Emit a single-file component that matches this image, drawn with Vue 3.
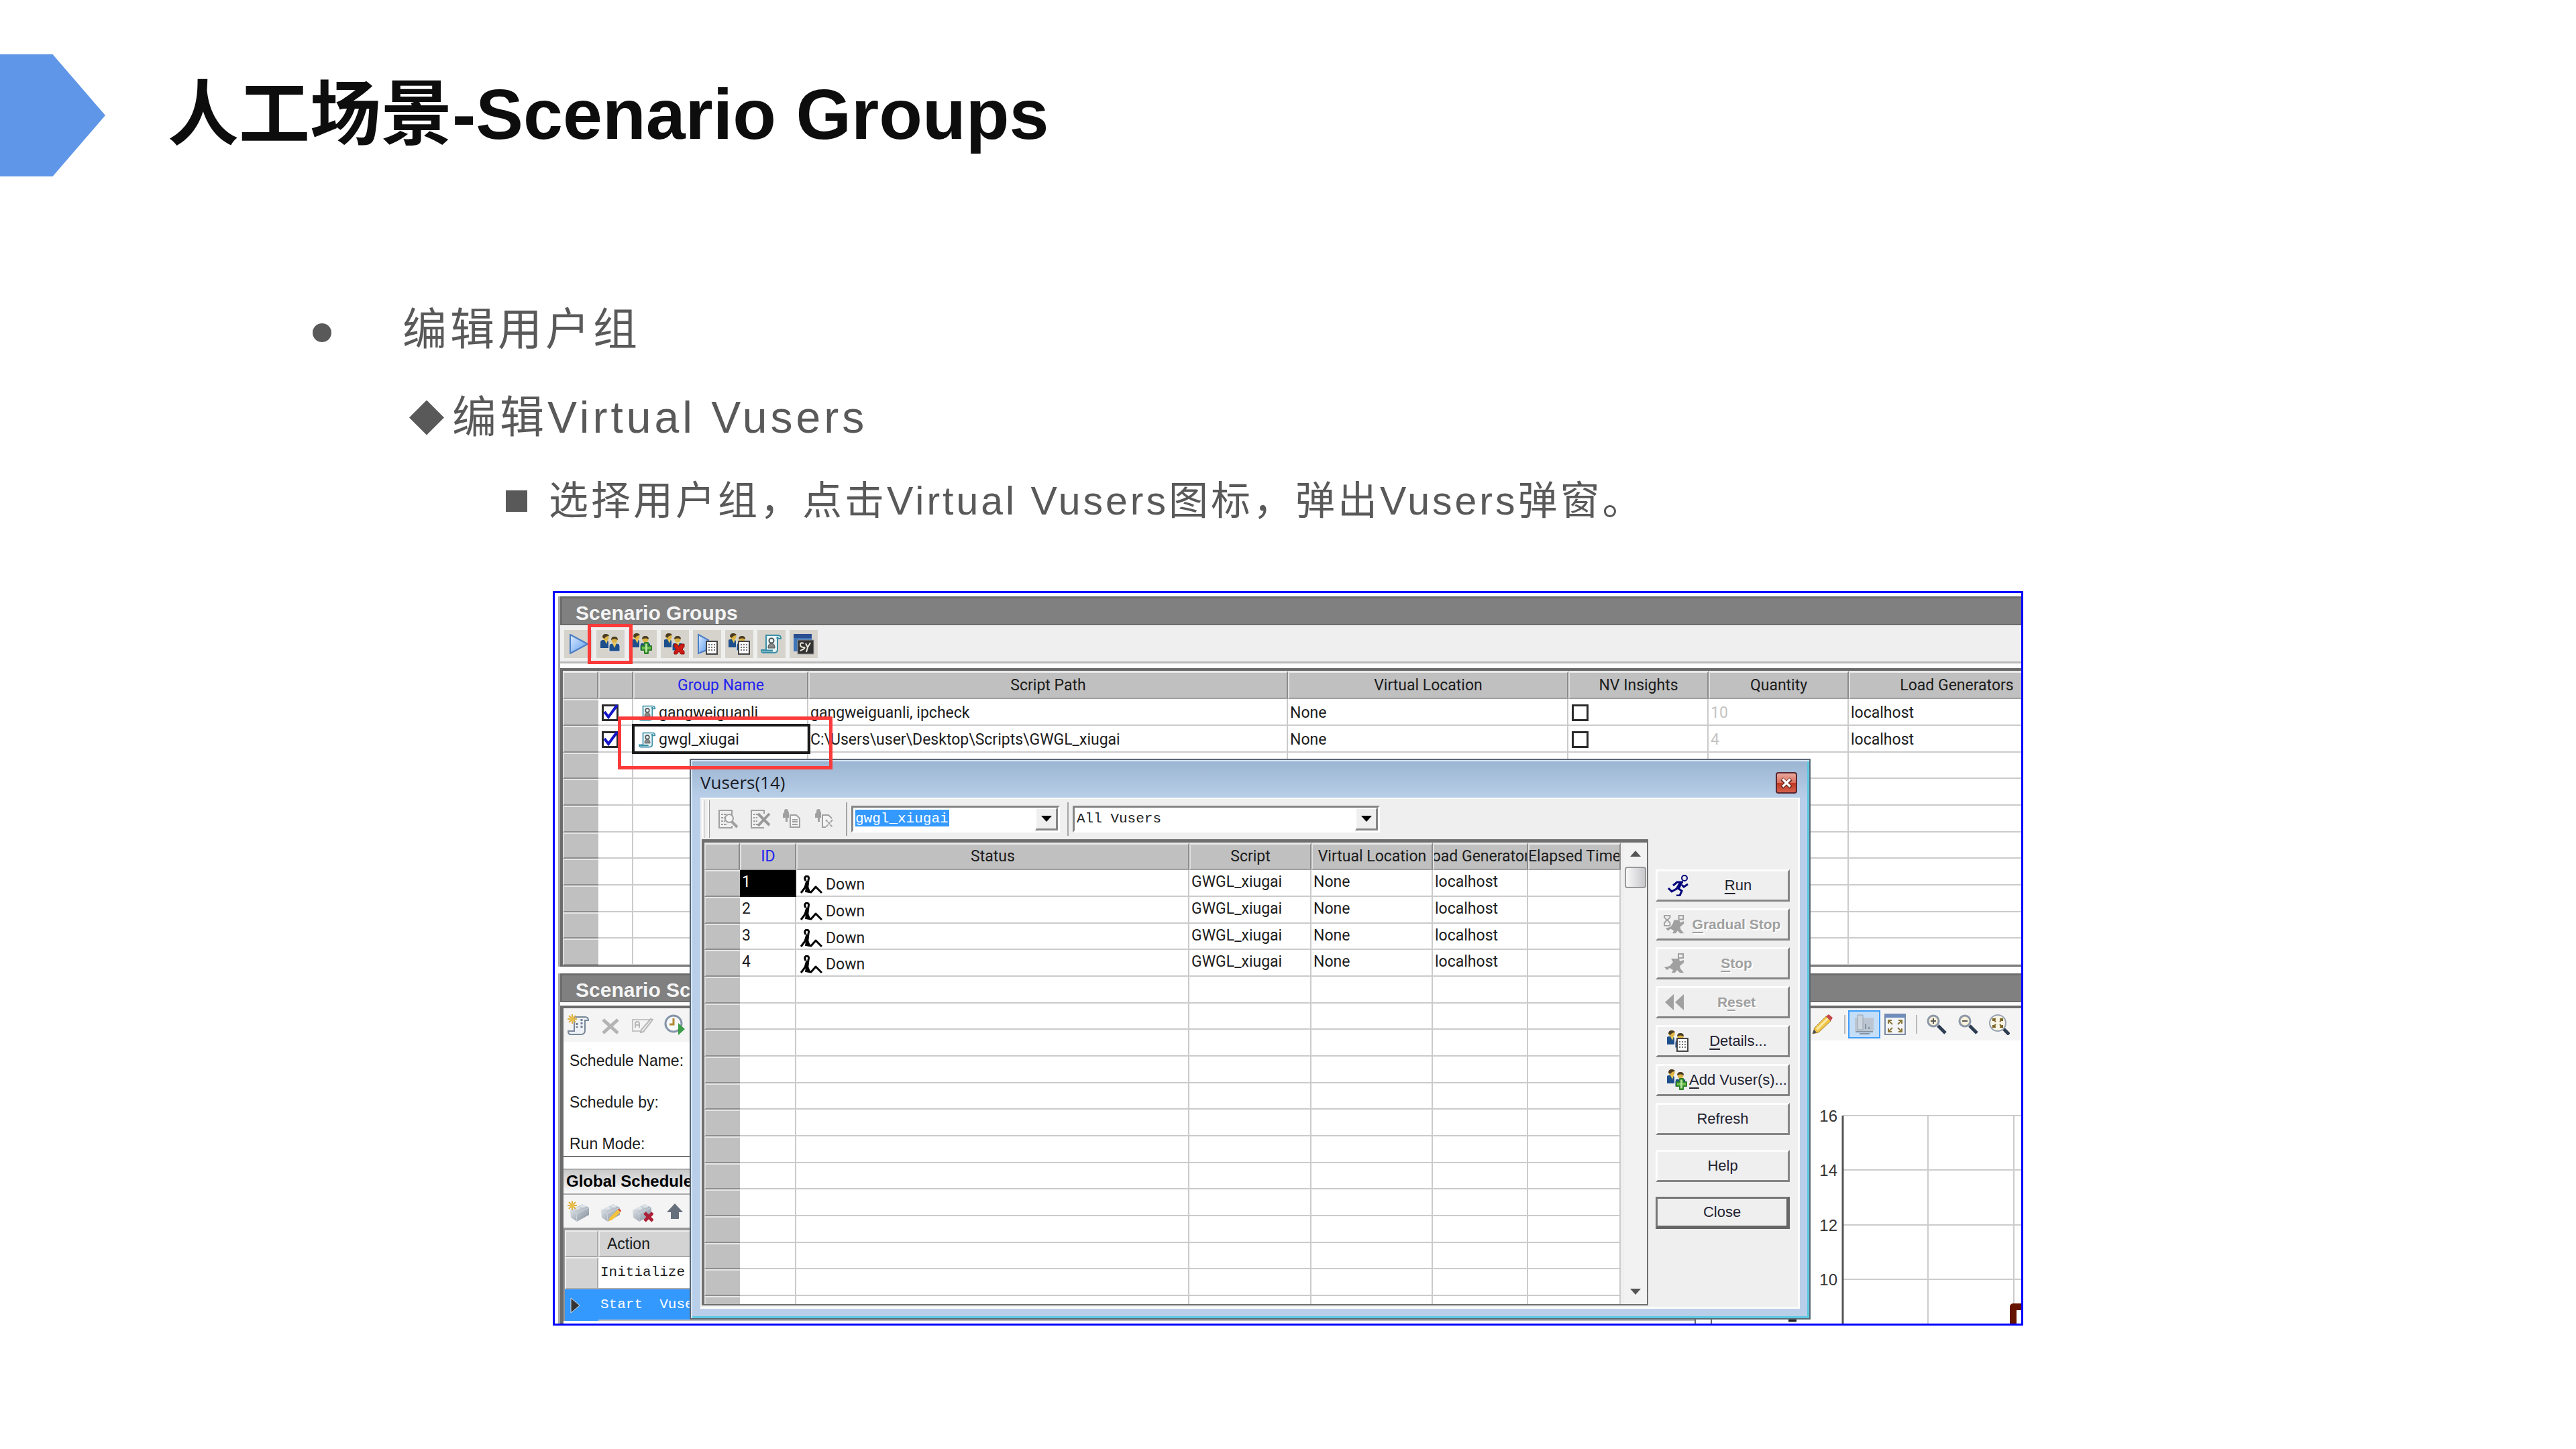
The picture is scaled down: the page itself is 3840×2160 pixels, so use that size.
<script setup>
const groupTools = ['play', 'users', 'users-add', 'users-del', 'play-list', 'users-list', 'script', 'sy']
const groupCols = [53, 52, 261, 715, 418, 209, 209, 322]
const groupHeads = ['', '', 'Group Name', 'Script Path', 'Virtual Location', 'NV Insights', 'Quantity', 'Load Generators']
const groups = [
  { name: 'gangweiguanli', path: 'gangweiguanli, ipcheck', loc: 'None', qty: 10, gen: 'localhost' },
  { name: 'gwgl_xiugai', path: 'C:\\Users\\user\\Desktop\\Scripts\\GWGL_xiugai', loc: 'None', qty: 4, gen: 'localhost', current: true },
]
const vuserTools = ['find', 'find-x', 'man-doc', 'man-x']
const vuserHeads = ['', 'ID', 'Status', 'Script', 'Virtual Location', 'Load Generators', 'Elapsed Time']
const vusers = [1, 2, 3, 4]
const actions = [
  { key: 'R', rest: 'un', icon: 'run' },
  { key: 'G', rest: 'radual Stop', icon: 'gradual', off: true },
  { key: 'S', rest: 'top', icon: 'stop', off: true },
  { pre: 'R', key: 'e', rest: 'set', icon: 'rewind', off: true },
  { key: 'D', rest: 'etails...', icon: 'users-list' },
  { key: 'A', rest: 'dd Vuser(s)...', icon: 'users-add' },
]
const ticks = [
  { v: 16, y: 112 },
  { v: 14, y: 193 },
  { v: 12, y: 275 },
  { v: 10, y: 356 },
]
</script>

<template>
  <main class="slide">
    <svg class="defs" aria-hidden="true">
      <defs>
        <linearGradient id="gPlay" x1="0" y1="0" x2="1" y2="1"><stop offset="0" stop-color="#dcebfd" /><stop offset="1" stop-color="#5b9bf0" /></linearGradient>
        <linearGradient id="gSteel" x1="0" y1="0" x2="1" y2="1"><stop offset="0" stop-color="#eef1f5" /><stop offset="1" stop-color="#7d8997" /></linearGradient>
        <symbol id="i-play" viewBox="0 0 32 32"><path d="M4 2L30 16 4 30z" fill="url(#gPlay)" stroke="#4a7ec4" stroke-width="2" stroke-linejoin="round" /></symbol>
        <symbol id="pair" viewBox="0 0 32 32">
          <path d="M1 22V14q0-4 4-4h4q4 0 4 4v8z" fill="#1d4f8c" />
          <path d="M7 10l3 6 2-6z" fill="#e8c95a" />
          <circle cx="9" cy="6" r="4.500" fill="#dcb445" /><path d="M4 6q0-5 5-5 4 0 5 3-5 0-7 4z" fill="#4a3c22" />
          <path d="M14 27v-8q0-4 4-4h8q4 0 4 4v8z" fill="#1d4f8c" stroke="#dfe6ee" stroke-width="1" />
          <path d="M19 15l3 7 3-7z" fill="#e8c95a" />
          <circle cx="22" cy="10" r="4.500" fill="#dcb445" /><path d="M17 10q0-5 5-5t5 5q-5-3-10 0z" fill="#4a3c22" />
        </symbol>
        <symbol id="i-users" viewBox="0 0 32 32"><use href="#pair" /></symbol>
        <symbol id="i-users-add" viewBox="0 0 32 32"><use href="#pair" x="-2" y="-1" /><path d="M19 14h5v5h5v6h-5v5h-5v-5h-5v-6h5z" fill="#6cc04a" stroke="#2f7f2b" stroke-width="2" stroke-linejoin="round" /><path d="M20 16h3v12h-3z" fill="#b5e69c" /></symbol>
        <symbol id="i-users-del" viewBox="0 0 32 32"><use href="#pair" x="-2" y="-1" /><path d="M15 16h4l3 4 3-4h5v4l-3 4 3 3v4h-5l-3-4-3 4h-4v-4l3-3-3-4z" fill="#cc1c14" stroke="#8d0f0b" stroke-width="1" /></symbol>
        <symbol id="sheet" viewBox="0 0 32 32"><path d="M15 12h16v19H15z" fill="#fafafa" stroke="#444" stroke-width="2" /><path d="M18 17h10M18 21h10M18 25h10" stroke="#777" stroke-width="2" stroke-dasharray="2 2" /></symbol>
        <symbol id="i-play-list" viewBox="0 0 32 32"><path d="M3 2L18 10V24L3 30z" fill="url(#gPlay)" stroke="#4a7ec4" stroke-width="2" /><use href="#sheet" /></symbol>
        <symbol id="i-users-list" viewBox="0 0 32 32"><use href="#pair" x="-2" y="-1" /><use href="#sheet" /></symbol>
        <symbol id="i-script" viewBox="0 0 32 32"><path d="M8 3h18q4 0 4 5h-5v16q0 5-5 5H4q-3 0-3-4h7z" fill="#e6f4f6" stroke="#3c8fa5" stroke-width="2" /><path d="M25 8V5M3 26h15" stroke="#3c8fa5" stroke-width="3" /><circle cx="16" cy="11" r="3.500" fill="none" stroke="#555" stroke-width="2" /><path d="M11 22q0-7 5-7t5 7z" fill="#888" stroke="#555" stroke-width="1" /></symbol>
        <symbol id="i-sy" viewBox="0 0 32 32"><path d="M1 1h27v26H1z" fill="#3f76b8" /><path d="M1 1h27v6H1z" fill="#2a4f91" /><path d="M7 10h24v21H7z" fill="#333" stroke="#999" stroke-width="1" /><path d="M16 15q-5-2-5 2t5 4-5 5M19 15l3 6 4-7M22 21l-2 7" fill="none" stroke="#e8e8d8" stroke-width="2" /></symbol>
        <symbol id="i-find" viewBox="0 0 32 32"><path d="M22 14V3H3v26h19v-3" fill="none" stroke="#a0a0a0" stroke-width="2" /><path d="M3 3h19M6 9h9M6 14h6M6 19h6M6 24h9" stroke="#a0a0a0" stroke-width="2" stroke-dasharray="3 1" /><circle cx="18" cy="15" r="6" fill="#f4f4f4" stroke="#a0a0a0" stroke-width="2" /><path d="M22 20l8 8" stroke="#a0a0a0" stroke-width="4" /></symbol>
        <symbol id="i-find-x" viewBox="0 0 32 32"><path d="M22 8V3H3v26h19" fill="none" stroke="#a0a0a0" stroke-width="2" /><path d="M3 3h19M6 9h9M6 14h6M6 19h6M6 24h7" stroke="#a0a0a0" stroke-width="2" stroke-dasharray="3 1" /><path d="M13 8l17 17M30 8L13 26" stroke="#999" stroke-width="4" /></symbol>
        <symbol id="i-man-doc" viewBox="0 0 32 32"><path d="M5 5h6v9H9v6H6v-6H2V8z" fill="#a0a0a0" /><circle cx="7" cy="4" r="3" fill="#a0a0a0" /><path d="M13 10h9l5 5v13H13z" fill="#f4f4f4" stroke="#a0a0a0" stroke-width="2" /><path d="M16 17h8M16 20h8M16 24h8" stroke="#a0a0a0" stroke-width="2" /></symbol>
        <symbol id="i-man-x" viewBox="0 0 32 32"><path d="M5 5h6v9H9v6H6v-6H2V8z" fill="#a0a0a0" /><circle cx="7" cy="4" r="3" fill="#a0a0a0" /><path d="M18 28h-5V10h9l5 5" fill="#f4f4f4" stroke="#a0a0a0" stroke-width="2" /><path d="M18 17l10 11M28 17L18 28" stroke="#a0a0a0" stroke-width="2" stroke-dasharray="4 1" /></symbol>
        <symbol id="i-down" viewBox="0 0 34 28"><path d="M9 8q-3-5 1-7 5 0 3 6L11 24" fill="none" stroke="#000" stroke-width="3" /><path d="M11 8L8 18l-6 8M9 23l8 2 7-8 9 9" fill="none" stroke="#000" stroke-width="3" stroke-linejoin="round" /><path d="M10 10l-2 15 9 1z" /></symbol>
        <symbol id="i-run" viewBox="0 0 32 32"><circle cx="26" cy="5" r="4" fill="none" stroke="#00007d" stroke-width="2" /><path d="M24 11H15l-6 5M20 12l-6 9-7 4-5-5M16 20l6 4-3 7h-5M22 15l3 3 6-4" fill="none" stroke="#00007d" stroke-width="3" /><path d="M19 10l4 2-4 9-5-2z" fill="#00007d" /></symbol>
        <symbol id="i-stop" viewBox="0 0 32 32"><path d="M22 2h7v6h-7z" fill="none" stroke="#a0a0a0" stroke-width="2" /><path d="M11 9h12l1 4 6-2v4l-6 5 1 4 5 6h-6l-4-4-3 4h-5l2-4-5-3-4 3-4-4 8-2 5-6z" fill="#a0a0a0" /></symbol>
        <symbol id="i-gradual" viewBox="0 0 34 32"><path d="M24 2h7v6h-7z" fill="none" stroke="#a0a0a0" stroke-width="2" /><path d="M16 9h9l1 4 6-2v4l-6 5 1 4 5 6h-6l-4-4-3 4h-5l2-4-5-3-4 3-4-4 8-2 4-6z" fill="#a0a0a0" /><path d="M1 2h9v3L6 9l4 5v4H1v-4l4-5-4-4z" fill="none" stroke="#a0a0a0" stroke-width="2" /></symbol>
        <symbol id="i-rewind" viewBox="0 0 32 32"><path d="M15 4v24L2 16zM30 4v24L17 16z" fill="#a0a0a0" /></symbol>
        <symbol id="star" viewBox="0 0 32 32"><path d="M7 0v14M0 7h14M2 2l10 10M12 2L2 12" stroke="#dcae3e" stroke-width="2" /><circle cx="7" cy="7" r="3.500" fill="#e9bf4c" /></symbol>
        <symbol id="i-sched-new" viewBox="0 0 32 32"><path d="M10 4h16q5 0 5 5h-5v15q0 6-6 6H5q-4 0-4-5h9z" fill="#eef2f6" stroke="#78879a" stroke-width="2" /><path d="M14 13v7M21 7v14" stroke="#6f7f93" stroke-width="3" stroke-dasharray="3 2" /><use href="#star" /></symbol>
        <symbol id="i-cross" viewBox="0 0 32 32"><path d="M5 8l22 20M27 8L5 28" stroke="#b4b4b4" stroke-width="5" /></symbol>
        <symbol id="i-rename" viewBox="0 0 32 32"><path d="M27 8H1v17h12" fill="none" stroke="#c4c4c4" stroke-width="2" /><path d="M5 20v-6q0-3 3-3t3 3v6M5 16h6" fill="none" stroke="#b8b8b8" stroke-width="2" /><path d="M31 8L17 26l-4 1 1-4L28 7z" fill="#eee" stroke="#b8b8b8" stroke-width="2" /></symbol>
        <symbol id="i-clock" viewBox="0 0 32 32"><circle cx="14" cy="14" r="12" fill="#f7f9fb" stroke="#8595a8" stroke-width="3" /><path d="M14 6v9H8" fill="none" stroke="#b28a32" stroke-width="3" /><path d="M21 13l10 9-10 9z" fill="#3c9c4a" /></symbol>
        <symbol id="brick" viewBox="0 0 32 32"><path d="M2 14L20 5l10 5v11L12 31 3 25z" fill="url(#gSteel)" /><path d="M2 14l9 5 19-9M11 19l1 12" fill="none" stroke="#cfd6de" stroke-width="1" /><ellipse cx="12" cy="11" rx="4" ry="2" fill="#dfe4ea" /><ellipse cx="21" cy="8" rx="4" ry="2" fill="#dfe4ea" /></symbol>
        <symbol id="i-brick-new" viewBox="0 0 32 32"><use href="#brick" x="2" /><use href="#star" /></symbol>
        <symbol id="i-brick-edit" viewBox="0 0 32 32"><use href="#brick" /><path d="M13 30l2-5L27 13l4 4-13 12z" fill="#f3c33e" /><path d="M27 13l2-1 3 2-1 3z" fill="#e0443c" /></symbol>
        <symbol id="i-brick-del" viewBox="0 0 32 32"><use href="#brick" x="-1" /><path d="M19 18l12 12M31 18L19 30" stroke="#ad1f35" stroke-width="5" /></symbol>
        <symbol id="i-up" viewBox="0 0 32 32"><path d="M16 4l12 13h-6v10H10V17H4z" fill="#66707d" /></symbol>
        <symbol id="i-pencil" viewBox="0 0 32 32"><path d="M1 30l3-9L21 4l7 7-18 17z" fill="#f0c548" stroke="#a5852f" stroke-width="1" /><path d="M6 22L23 6l2 2L8 25z" fill="#fae9a5" /><path d="M21 4l4-3 6 5-3 5z" fill="#c4474a" /><path d="M1 30l2-6 4 4z" fill="#3b4b60" /></symbol>
        <symbol id="i-monitor" viewBox="0 0 32 32"><path d="M2 6h28v20H2z" fill="#bcc6d2" /><path d="M6 2h8v22H6z" fill="#cdd5de" stroke="#98a4b2" stroke-width="1" /><path d="M18 15v8M23 20v3M3 27h26M9 30h15" stroke="#8693a3" stroke-width="2" /></symbol>
        <symbol id="i-fit" viewBox="0 0 32 32"><path d="M1 1h30v30H1z" fill="#f3f5f8" stroke="#7a8aa3" stroke-width="2" /><path d="M1 1h30v5H1z" fill="#6f8cbd" /><path d="M6 15v-5h5M6 10l6 6M26 15v-5h-5M26 10l-6 6M6 22v5h5M6 27l6-6M26 22v5h-5M26 27l-6-6" fill="none" stroke="#8b7537" stroke-width="2" /></symbol>
        <symbol id="lens" viewBox="0 0 32 32"><path d="M19 18l11 11" stroke="#2e3d52" stroke-width="5" /><circle cx="12" cy="11" r="8" fill="#f8f1da" stroke="#8d99a8" stroke-width="3" /></symbol>
        <symbol id="i-zoom-in" viewBox="0 0 32 32"><use href="#lens" /><path d="M12 7v8M8 11h8" stroke="#555" stroke-width="2" /></symbol>
        <symbol id="i-zoom-out" viewBox="0 0 32 32"><use href="#lens" /><path d="M8 11h8" stroke="#555" stroke-width="2" /></symbol>
        <symbol id="i-zoom-fit" viewBox="0 0 32 32"><path d="M22 22l9 9" stroke="#2e3d52" stroke-width="5" /><circle cx="14" cy="14" r="12" fill="#f8f4e6" stroke="#98a3b1" stroke-width="2" /><path d="M7 11V8h4M17 8h4v3M7 17v3h4M17 20h4v-3M8 9l3 3M20 9l-3 3M8 19l3-3M20 19l-3-3" fill="none" stroke="#7b6426" stroke-width="2" /></symbol>
      </defs>
    </svg>

    <header class="head">
      <span class="pointer"></span>
      <h1>人工场景-Scenario Groups</h1>
    </header>

    <ul class="outline">
      <li class="l1"><span class="dot"></span>编辑用户组</li>
      <li class="l2"><span class="diamond"></span>编辑Virtual Vusers</li>
      <li class="l3"><span class="square"></span>选择用户组，点击Virtual Vusers图标，弹出Vusers弹窗。</li>
    </ul>

    <section class="frame">
      <section class="panel">
        <h2 class="bar">Scenario Groups</h2>
        <div class="tools">
          <button v-for="t in groupTools" :key="t" type="button" class="tile" :aria-label="t">
            <svg><use :href="'#i-' + t" /></svg>
          </button>
        </div>
        <div class="grid-wrap">
          <table class="grid groups">
            <colgroup><col v-for="(w, i) in groupCols" :key="i" :style="{ width: w + 'px' }" /></colgroup>
            <thead>
              <tr><th v-for="(h, i) in groupHeads" :key="i" :class="{ key: i === 2 }">{{ h }}</th></tr>
            </thead>
            <tbody>
              <tr v-for="g in groups" :key="g.name">
                <td class="rowhead"></td>
                <td class="check"><label class="box"><input type="checkbox" checked :aria-label="g.name" /><svg viewBox="0 0 25 25"><path d="M4 11l6 8L23 1" fill="none" stroke="#1414c8" stroke-width="4" /></svg></label></td>
                <td :class="{ current: g.current }"><span class="named"><svg><use href="#i-script" /></svg>{{ g.name }}</span></td>
                <td>{{ g.path }}</td>
                <td>{{ g.loc }}</td>
                <td class="check"><label class="box"><input type="checkbox" aria-label="NV Insights" /></label></td>
                <td class="dim">{{ g.qty }}</td>
                <td>{{ g.gen }}</td>
              </tr>
              <tr v-for="n in 8" :key="n"><td class="rowhead"></td><td v-for="c in 7" :key="c"></td></tr>
            </tbody>
          </table>
        </div>
      </section>

      <section class="panel lower">
        <h2 class="bar">Scenario Schedule</h2>
        <div class="halves">
          <div class="schedule">
            <div class="strip">
              <button v-for="t in ['sched-new', 'cross', 'rename', 'clock']" :key="t" type="button" class="plain" :aria-label="t"><svg><use :href="'#i-' + t" /></svg></button>
            </div>
            <dl class="fields">
              <dt>Schedule Name:</dt>
              <dt>Schedule by:</dt>
              <dt>Run Mode:</dt>
            </dl>
            <h3>Global Schedule</h3>
            <div class="strip bricks">
              <button v-for="t in ['brick-new', 'brick-edit', 'brick-del', 'up']" :key="t" type="button" class="plain" :aria-label="t"><svg><use :href="'#i-' + t" /></svg></button>
            </div>
            <table class="acts">
              <thead><tr><th></th><th>Action</th></tr></thead>
              <tbody>
                <tr><th></th><td>Initialize</td></tr>
                <tr class="on"><th><svg viewBox="0 0 16 24"><path d="M1 1l13 11L1 23z" fill="#333" stroke="#ddd" stroke-width="1" /></svg></th><td>Start&nbsp; Vusers</td></tr>
              </tbody>
            </table>
          </div>
          <div class="graph">
            <div class="strip graph-tools">
              <button type="button" class="plain" aria-label="Edit"><svg><use href="#i-pencil" /></svg></button>
              <i class="sep"></i>
              <button type="button" class="plain picked" aria-label="Graph"><svg><use href="#i-monitor" /></svg></button>
              <button type="button" class="plain" aria-label="Fit"><svg><use href="#i-fit" /></svg></button>
              <i class="sep"></i>
              <button v-for="t in ['zoom-in', 'zoom-out', 'zoom-fit']" :key="t" type="button" class="plain" :aria-label="t"><svg><use :href="'#i-' + t" /></svg></button>
            </div>
            <svg class="chart" width="464" height="422" viewBox="0 0 464 422">
              <g v-for="t in ticks" :key="t.v">
                <path :d="`M195 ${t.y}H464`" stroke="#ccc" stroke-width="2" />
                <text x="187" :y="t.y + 9" text-anchor="end">{{ t.v }}</text>
              </g>
              <path d="M322 112V422M450 112V422" stroke="#ccc" stroke-width="2" />
              <path d="M195 112V422" stroke="#555" stroke-width="3" />
              <path d="M464 397H449V422" fill="none" stroke="#661400" stroke-width="10" stroke-linejoin="round" />
              <path d="M114 417H126" stroke="#222" stroke-width="5" />
            </svg>
          </div>
        </div>
      </section>

      <section class="dialog" role="dialog" aria-label="Vusers">
        <header class="caption">
          <span>Vusers(14)</span>
          <button type="button" class="x" aria-label="Close window"><svg viewBox="0 0 16 16"><path d="M2 3l12 11M14 3L2 14" stroke="#6b2a22" stroke-width="5" /><path d="M3 3l10 10M13 3L3 13" stroke="#fff" stroke-width="3" /></svg></button>
        </header>
        <div class="body">
          <div class="vtools">
            <i class="grip"></i><i class="grip"></i>
            <button v-for="t in vuserTools" :key="t" type="button" class="plain" :aria-label="t"><svg><use :href="'#i-' + t" /></svg></button>
            <i class="sep first"></i>
            <label class="combo group"><select aria-label="Group"><option>gwgl_xiugai</option></select><span class="drop"></span></label>
            <i class="sep second"></i>
            <label class="combo filter"><select aria-label="Filter"><option>All Vusers</option></select><span class="drop"></span></label>
          </div>
          <div class="split">
            <div class="vwrap">
              <div class="vclip">
                <table class="grid vusers">
                  <colgroup><col class="w53" /><col class="w84" /><col /><col class="w182" /><col class="w181" /><col class="w142" /><col class="w138" /></colgroup>
                  <thead>
                    <tr><th v-for="(h, i) in vuserHeads" :key="i" :class="{ key: i === 1 }"><span class="mid">{{ h }}</span></th></tr>
                  </thead>
                  <tbody>
                    <tr v-for="v in vusers" :key="v">
                      <td class="rowhead"></td>
                      <td :class="{ black: v === 1 }">{{ v }}</td>
                      <td><span class="status"><svg><use href="#i-down" /></svg>Down</span></td>
                      <td>GWGL_xiugai</td>
                      <td>None</td>
                      <td>localhost</td>
                      <td></td>
                    </tr>
                    <tr v-for="n in 13" :key="n"><td class="rowhead"></td><td v-for="c in 6" :key="c"></td></tr>
                  </tbody>
                </table>
              </div>
              <div class="scroll"><i class="up"></i><i class="thumb"></i><i class="down"></i></div>
            </div>
            <div class="side">
              <button v-for="a in actions" :key="a.icon" type="button" class="btn" :class="{ off: a.off }" :disabled="a.off">
                <svg><use :href="'#i-' + a.icon" /></svg>
                <span>{{ a.pre }}<u>{{ a.key }}</u>{{ a.rest }}</span>
              </button>
              <button type="button" class="btn">Refresh</button>
              <button type="button" class="btn apart">Help</button>
              <button type="button" class="btn apart default">Close</button>
            </div>
          </div>
        </div>
      </section>

      <i class="mark tool-mark"></i>
      <i class="mark row-mark"></i>
    </section>
  </main>
</template>

<style>
body { background: #fff; }
</style>

<style scoped>
* { box-sizing: border-box; }
.slide { font-family: "Liberation Sans", "Noto Sans CJK SC", sans-serif; padding-top: 81px; color: #595959; }
.defs { position: absolute; width: 0; height: 0; }
h1, h2, h3, ul, dl { margin: 0; padding: 0; }
button { font: inherit; color: inherit; padding: 0; border: 0; background: none; }
.head { display: flex; align-items: center; gap: 93px; }
.pointer { width: 157px; height: 182px; background: #5f96e7; clip-path: polygon(0 0, 50% 0, 100% 50%, 50% 100%, 0 100%); }
h1 { font-size: 106px; line-height: 178px; height: 182px; color: #0d0d0d; font-weight: 700; }

.outline { list-style: none; margin-top: 163px; }
.outline li { display: flex; align-items: center; white-space: nowrap; }
.l1, .l2 { font-size: 66px; line-height: 131px; letter-spacing: 5px; }
.l1 { padding-left: 466px; gap: 106px; }
.l2 { padding-left: 610px; gap: 12px; }
.l3 { font-size: 59px; line-height: 118px; letter-spacing: 4px; padding-left: 754px; gap: 32px; }
.dot { width: 28px; height: 28px; margin-top: 8px; border-radius: 50%; background: #595959; }
.diamond { width: 52px; height: 52px; background: #595959; clip-path: polygon(50% 0, 100% 50%, 50% 100%, 0 50%); }
.square { width: 32px; height: 32px; background: #595959; }

.frame { position: relative; margin: 75px 824px 0; border: 3px solid #00f; padding: 5px 0 0 5px; overflow: hidden; color: #1c1c1c; font-family: Roboto, "Liberation Sans", sans-serif; font-size: 23px; background: #fdfdfd; }
.panel { border-left: 3px solid #a8a8a8; }
.bar { height: 43px; padding-left: 20px; background: #808080; border: solid #6c6c6c; border-width: 3px 0 2px 3px; color: #f4f4f4; font: 700 30px/44px "Liberation Sans", sans-serif; }
.tools { display: flex; align-items: center; gap: 6px; height: 57px; padding: 2px 6px 0; background: #efefef; border-bottom: 3px solid #b9b9b9; }
.tile { width: 42px; height: 42px; background: #d6d3cc; display: grid; place-items: center; }
.tile svg, .plain svg { display: block; width: 32px; height: 32px; }
.grid-wrap { margin-top: 7px; border: solid #6b6b6b; border-width: 4px 0 2px 4px; overflow: hidden; }

.grid { table-layout: fixed; border-collapse: separate; border-spacing: 0; background: #fff; }
.groups { width: 2239px; }
.grid th { height: 42px; padding: 0; background: #c0c0c0; border: solid; border-width: 3px 2px 2px 2px; border-color: #e9e9e9 #8b8b8b #a0a0a0 #e0e0e0; font-weight: 400; text-align: center; line-height: 34px; overflow: hidden; }
.grid .key { color: #2222f0; }
.grid td { height: 40px; padding: 3px 3px 0; border: solid #cbcbcb; border-width: 0 2px 2px 0; line-height: 34px; white-space: nowrap; }
.grid tr:nth-child(3n) td { height: 39px; }
.grid td.rowhead { background: #c0c0c0; border: solid; border-width: 2px 0 2px 2px; border-color: #e6e6e6 #c0c0c0 #8e8e8e #dcdcdc; }
.grid td.check { padding-left: 5px; }
.grid td.dim { color: #c4c4c4; }
.named { display: flex; align-items: center; gap: 4px; padding-left: 5px; }
.named svg { width: 26px; height: 30px; }
.current { position: relative; }
.current::after { content: ""; position: absolute; inset: -3px -5px -4px -2px; border: 4px solid #1a1a1a; }
.box { position: relative; display: block; width: 25px; height: 25px; }
.box input { appearance: none; display: block; margin: 0; width: 25px; height: 25px; border: 3px solid #2b2b2b; background: #fff; }
.box svg { position: absolute; inset: 0; width: 25px; height: 25px; }

.lower { margin-top: 10px; }
.halves { display: grid; grid-template-columns: 1693px 1fr; gap: 22px; border-top: 4px solid #6b6b6b; margin-top: 5px; }
.schedule { border: solid #6b6b6b; border-width: 0 2px 0 5px; background: #fff; }
.graph { border-left: 2px solid #6b6b6b; background: #fff; min-width: 0; overflow: hidden; }
.strip { display: flex; align-items: center; gap: 16px; height: 50px; padding: 0 6px; background: #f4f4f4; }
.fields { font: 23px/26px "Liberation Sans", sans-serif; padding: 15px 9px 0; height: 172px; border-bottom: 2px solid #777; display: flex; flex-direction: column; gap: 36px; }
h3 { margin-top: 17px; height: 39px; padding-left: 4px; background: linear-gradient(#c9c9c9, #fafafa); border: solid #aaa; border-width: 2px 0; font: 700 24px/34px "Liberation Sans", sans-serif; color: #000; }
.bricks { height: 49px; }
.acts { width: 100%; border-spacing: 0; table-layout: fixed; border: solid #999; border-width: 4px 0 0 2px; }
.acts th { width: 50px; padding: 0; height: 40px; background: #d3d3d3; border: solid; border-width: 2px; border-color: #eee #aaa #aaa #eee; }
.acts th:last-child { width: auto; text-align: left; padding-left: 11px; font: 23px/34px "Liberation Sans", sans-serif; }
.acts td { height: 48px; padding: 0 3px; border-bottom: 2px solid #aaa; font: 21px/44px "Liberation Mono", monospace; }
.acts .on th, .acts .on td { height: 47px; background: #39f; color: #fff; border-color: #bbb; }
.acts .on th { border-color: #39f; }
.acts svg { display: block; width: 16px; height: 24px; margin-left: 6px; }
.graph-tools { height: 48px; padding: 0 0 0 149px; gap: 0; }
.sep { width: 2px; height: 28px; background: #bbb; flex: none; }
.graph-tools .plain { flex: none; }
.graph-tools .sep { margin: 0 4px 0 16px; }
.graph-tools .sep ~ .sep { margin: 0 12px 0 15px; }
.graph-tools .sep ~ .sep ~ .plain { margin-right: 15px; }
.graph-tools .picked { padding: 3px 6px; border: 2px solid #3d9dfc; background: #c4def8; margin-right: 6px; height: 42px; }
.chart { display: block; }
.chart text { font: 24px "Liberation Sans", sans-serif; fill: #333; }

.dialog { position: absolute; top: 247px; left: 201px; right: 314px; border: 2px solid #5b6773; background: linear-gradient(#9ab4d1, #b9cfe9 58px); padding: 0 14px 14px 14px; box-shadow: inset 2px 2px 0 #d5e4f3, inset -3px -3px 0 #5cc8e0; }
.caption { display: flex; justify-content: space-between; height: 56px; line-height: 66px; font-family: "Open Sans", sans-serif; font-size: 26px; color: #1b1b26; }
.x { width: 32px; height: 32px; margin: 18px 4px 0 0; border: 2px solid #5a2630; border-radius: 4px; background: linear-gradient(#e9a79c, #d9705f 50%, #c1351f 50%, #d4614c); display: grid; place-items: center; }
.x svg { width: 18px; height: 18px; }
.body { background: #efefef; border: solid #fbfbfb; border-width: 2px 3px 3px 0; }
.vtools { display: flex; align-items: center; height: 60px; padding-left: 3px; }
.grip { width: 3px; height: 56px; background: #fff; border-right: 1px solid #999; margin-right: 5px; }
.vtools .plain { margin: 0 10px 0 6px; }
.vtools .sep { height: 50px; margin: 0 6px 0 6px; background: #a5a5a5; }
.vtools .second { margin: 0 6px 0 11px; }
.combo { position: relative; display: block; height: 40px; width: 311px; border: solid; border-width: 3px; border-color: #858585 #fff #fff #858585; }
.combo.filter { width: 458px; }
.combo select { appearance: none; display: block; width: 100%; height: 34px; border: 0; padding: 0 3px; border-radius: 0; background: #fff; color: #1c1c1c; font: 21px/26px "Liberation Mono", monospace; }
.combo.group select { color: #fff; background: linear-gradient(#39f, #39f) 3px 3px / 140px 25px no-repeat #fff; }
.drop { position: absolute; top: 0; right: 0; width: 34px; height: 34px; background: #efefef; border: solid; border-width: 2px 3px 3px 2px; border-color: #fff #858585 #858585 #fff; pointer-events: none; }
.drop::after { content: ""; position: absolute; left: 7px; top: 10px; border: solid transparent; border-width: 9px 8px 0; border-top-color: #000; }
.split { display: flex; }
.vwrap { flex: 1; min-width: 0; display: flex; gap: 5px; margin: 0 0 2px 2px; border: solid #6f6f6f; border-width: 5px 2px 2px 4px; }
.vclip { flex: 1; min-width: 0; height: 688px; overflow: hidden; background: #fff; }
.vusers { width: 100%; }
.vusers th { height: 41px; }
.grid.vusers td { padding-top: 2px; line-height: 31px; vertical-align: top; }
.mid { display: flex; justify-content: center; white-space: nowrap; }
.w53 { width: 53px; }
.w84 { width: 84px; }
.w182 { width: 182px; }
.w181 { width: 181px; }
.w142 { width: 142px; }
.w138 { width: 138px; }
.grid.vusers td.black { background: #000; color: #fff; border-color: #111; }
.status { display: flex; align-items: center; gap: 5px; padding: 4px 0 0 2px; }
.status svg { width: 34px; height: 28px; }
.scroll { width: 34px; display: flex; flex-direction: column; align-items: center; background: #f2f2f2; padding: 12px 0 14px; }
.up, .down { border: solid transparent; border-width: 0 8px 9px; border-bottom-color: #555; }
.down { border-width: 9px 8px 0; border-top-color: #555; margin-top: auto; }
.thumb { width: 32px; height: 32px; margin-top: 15px; border: 2px solid #999; border-radius: 4px; background: linear-gradient(90deg, #f8f8f8, #c8c8cc); }
.side { width: 223px; display: flex; flex-direction: column; gap: 10px; padding: 45px 12px 0 11px; }
.btn { display: flex; align-items: center; justify-content: center; width: 200px; height: 48px; border: solid; border-width: 3px; border-color: #fdfdfd #858585 #858585 #fdfdfd; background: #efefef; font: 22px "Liberation Sans", sans-serif; white-space: nowrap; color: #222230; }
.btn svg { flex: none; width: 32px; height: 32px; margin-left: 14px; }
.btn span { flex: 1; text-align: center; }
.btn u { text-underline-offset: 4px; text-decoration-thickness: 2px; }
.btn.off { color: #a0a0a0; font-weight: 700; font-size: 21px; text-shadow: 2px 2px 0 #fff; }
.btn.off svg { margin-left: 9px; }
.apart { margin-top: 12px; }
.default { border-color: #777 #666 #666 #777; border-width: 3px 5px 5px 3px; }

.mark { position: absolute; border: 5px solid #fb3a3a; }
.tool-mark { left: 49px; top: 46px; width: 67px; height: 60px; }
.row-mark { left: 94px; top: 184px; width: 320px; height: 79px; }
</style>
